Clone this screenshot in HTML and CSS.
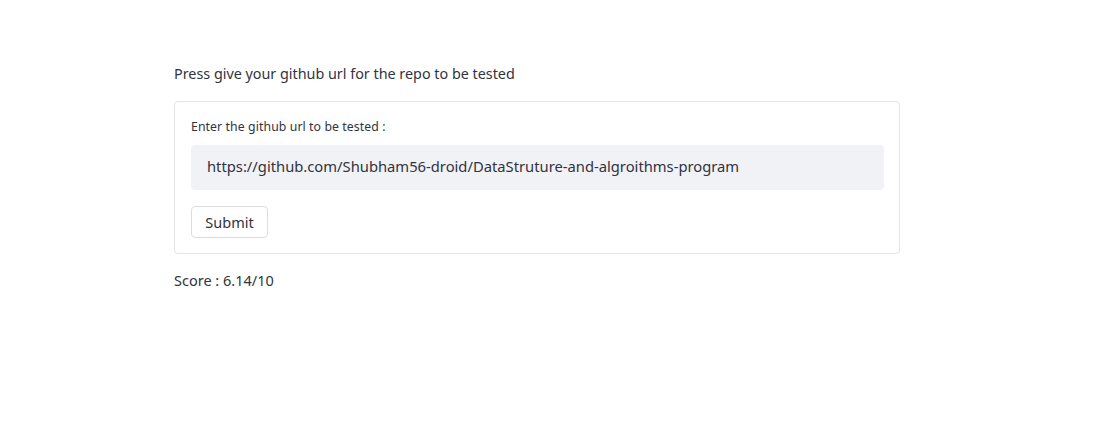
FILE: index.html
```html
<!DOCTYPE html>
<html>
<head>
<meta charset="utf-8">
<link rel="stylesheet" href="styles.css">
</head>
<body>
<main class="main">
  <p class="intro">Press give your github url for the repo to be tested</p>
  <form class="form">
    <label class="label">Enter the github url to be tested :</label>
    <div class="input">https://github.com/Shubham56-droid/DataStruture-and-algroithms-program</div>
    <button type="button" class="btn">Submit</button>
  </form>
  <p class="score">Score : 6.14/10</p>
</main>
</body>
</html>
```
FILE: styles.css
```css
html, body { margin: 0; background: #fff; }
body { font-family: "Noto Sans", "Open Sans", sans-serif; color: #31333f; }
.main { width: 726px; margin-left: 174px; padding-top: 64px; display: flex; flex-direction: column; }
.intro { margin: 0; font-size: 14.35px; line-height: 20px; height: 20px; }
.form { margin-top: 17px; border: 1px solid #e3e4e8; border-radius: 4px; padding: 16px 15px 14px 16px; display: flex; flex-direction: column; height: 121px; }
.label { font-size: 12.25px; line-height: 18px; color: #31333f; letter-spacing: 0.1px; }
.input { margin-top: 9px; height: 45px; background: #f0f2f6; border-radius: 4px; padding-left: 16px; font-size: 14.75px; line-height: 43px; }
.btn { margin-top: 16px; align-self: flex-start; width: 77px; height: 32px; background: #fff; border: 1px solid #dcdde1; border-radius: 4px; font-family: inherit; font-size: 14.5px; color: #31333f; padding: 0; }
.score { margin: 16px 0 0; font-size: 14.5px; line-height: 20px; }
```
